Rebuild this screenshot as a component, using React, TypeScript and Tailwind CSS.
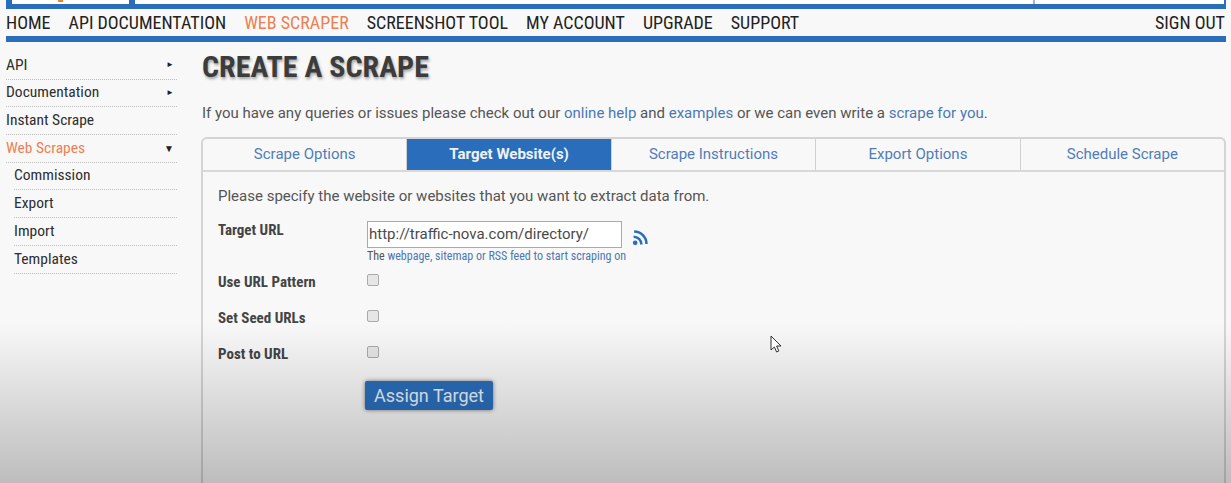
const nav = ["HOME", "API DOCUMENTATION", "WEB SCRAPER", "SCREENSHOT TOOL", "MY ACCOUNT", "UPGRADE", "SUPPORT"];
const tabs = ["Scrape Options", "Target Website(s)", "Scrape Instructions", "Export Options", "Schedule Scrape"];
const subItems = ["Commission", "Export", "Import", "Templates"];
const options = ["Use URL Pattern", "Set Seed URLs", "Post to URL"];

function SideItem({ label, arrow, active }: { label: string; arrow?: string; active?: boolean }) {
  return (
    <div className={`flex h-[27.7px] items-center justify-between border-b border-dotted border-[#bdbdbd] pr-[3px] text-[15.5px] [font-stretch:75%] ${active ? "text-[#ee7f55]" : "text-[#2e2e2e]"}`}>
      <span>{label}</span>
      {arrow && <span className={`text-[#222] ${active ? "text-[10px]" : "text-[8px]"}`}>{arrow}</span>}
    </div>
  );
}

export default function App() {
  return (
    <div className="relative h-[483px] w-[1231px] overflow-hidden bg-[#f8f8f8] font-['Roboto',sans-serif] text-[#444]">
      {/* top strip, cut off by the video frame */}
      <div className="ml-[6px] mr-[5px] flex h-[9px] bg-[#2a6ebb] pb-[5px] pl-[6px] pr-[2px]">
        <div className="relative w-[117px] bg-white">
          <div className="absolute left-[46px] top-0 h-[2px] w-[5px] bg-[#f08030]" />
        </div>
        <div className="ml-[6px] w-[898px] bg-white" />
        <div className="w-[2px] bg-[#9db8d8]" />
        <div className="flex-1 bg-white" />
      </div>

      {/* main nav */}
      <div className="ml-[6px] mr-[6px] flex h-[27px] items-center justify-between text-[18px] leading-none text-[#222] [font-stretch:75%]">
        <div className="flex gap-[18px]">
          {nav.map((n) => (
            <span key={n} className={n === "WEB SCRAPER" ? "text-[#ee7f50]" : ""}>{n}</span>
          ))}
        </div>
        <span>SIGN OUT</span>
      </div>
      <div className="ml-[6px] mr-[5px] h-[6px] bg-[#2a6ebb]" />

      <div className="flex">
        {/* sidebar */}
        <div className="ml-[6px] mt-[10px] w-[171px] shrink-0">
          <SideItem label="API" arrow="►" />
          <SideItem label="Documentation" arrow="►" />
          <SideItem label="Instant Scrape" />
          <SideItem label="Web Scrapes" arrow="▼" active />
          <div className="pl-[8px]">
            {subItems.map((s) => (
              <SideItem key={s} label={s} />
            ))}
          </div>
        </div>

        {/* content */}
        <div className="ml-[24px] flex-1 pr-[5px]">
          <h1 className="mt-[7px] pl-[1px] text-[30px] leading-[36px] font-bold text-[#3c3c3c] [font-stretch:75%] [text-shadow:1px_2px_3px_rgba(0,0,0,0.35)]">CREATE A SCRAPE</h1>
          <p className="mt-[18px] pl-[1px] text-[15px] leading-[20px] text-[#555]">
            If you have any queries or issues please check out our <span className="text-[#4a78b5]">online help</span> and <span className="text-[#4a78b5]">examples</span> or we can even write a <span className="text-[#4a78b5]">scrape for you</span>.
          </p>

          {/* tab panel */}
          <div className="mt-[14px] h-[400px] rounded-t-[6px] border-2 border-b-0 border-[#d4d4d4]">
            <div className="flex h-[33px] border-b-2 border-[#d8d8d8]">
              {tabs.map((t, i) => (
                <div
                  key={t}
                  className={`flex flex-1 items-center justify-center border-r border-[#d0d0d0] text-[15px] last:border-r-0 ${i === 1 ? "bg-[#2a6ebb] font-bold text-[#eef3fa]" : "text-[#4f7db8]"}`}
                >
                  {t}
                </div>
              ))}
            </div>
            <div className="pl-[15px]">
              <p className="mt-[14px] text-[15px] leading-[20px] text-[#555]">Please specify the website or websites that you want to extract data from.</p>
              <div className="mt-[14px] flex">
                <div className="w-[149px] text-[15px] leading-[20px] font-bold text-[#444] [font-stretch:75%]">Target URL</div>
                <div>
                  <div className="flex items-center gap-[10px] pt-[1px]">
                    <div className="flex h-[27px] w-[255px] items-center border border-[#aaa] bg-white pl-[1px] text-[15px] text-[#4a4a4a]">http://traffic-nova.com/directory/</div>
                    <svg viewBox="0 0 16 16" className="mt-[6px] h-[17px] w-[17px]" fill="none" stroke="#2a6ebb" strokeWidth="2.4">
                      <circle cx="3" cy="13" r="2.2" fill="#2a6ebb" stroke="none" />
                      <path d="M1.5 7.2a7.3 7.3 0 0 1 7.3 7.3" />
                      <path d="M2 2.4a11.6 11.6 0 0 1 11.6 11.6" />
                    </svg>
                  </div>
                  <div className="mt-[1px] text-[12px] leading-[14px] text-[#555] [font-stretch:75%]">The <span className="text-[#4a78b5]">webpage, sitemap or RSS feed to start scraping on</span></div>
                </div>
              </div>
              {options.map((o, i) => (
                <div key={o} className={`flex h-[20px] items-center ${i === 0 ? "mt-[9px]" : "mt-[16px]"}`}>
                  <div className="w-[149px] text-[15px] font-bold text-[#444] [font-stretch:75%]">{o}</div>
                  <div className="mb-[4px] h-[12px] w-[12px] rounded-[2px] border border-[#aaa] bg-[#e6e6e6]" />
                </div>
              ))}
              <button className="ml-[147px] mt-[17px] h-[29px] w-[128px] rounded-[2px] bg-[#2a6ebb] text-[18px] text-[#e9eff8] shadow-[0_0_4px_rgba(0,0,0,0.5)]">Assign Target</button>
            </div>
          </div>
        </div>
      </div>

      {/* video fade along the bottom */}
      <div className="pointer-events-none absolute inset-x-0 bottom-0 h-[160px] bg-gradient-to-b from-transparent to-[rgba(0,0,0,0.24)]" />

      {/* mouse pointer */}
      <svg viewBox="0 0 14 20" className="absolute left-[770px] top-[335px] h-[20px] w-[14px]" fill="#fff" stroke="#333" strokeWidth="1">
        <path d="M1 1v14l3.4-3 2.2 5 2.2-1-2.2-5H11z" />
      </svg>
    </div>
  );
}
